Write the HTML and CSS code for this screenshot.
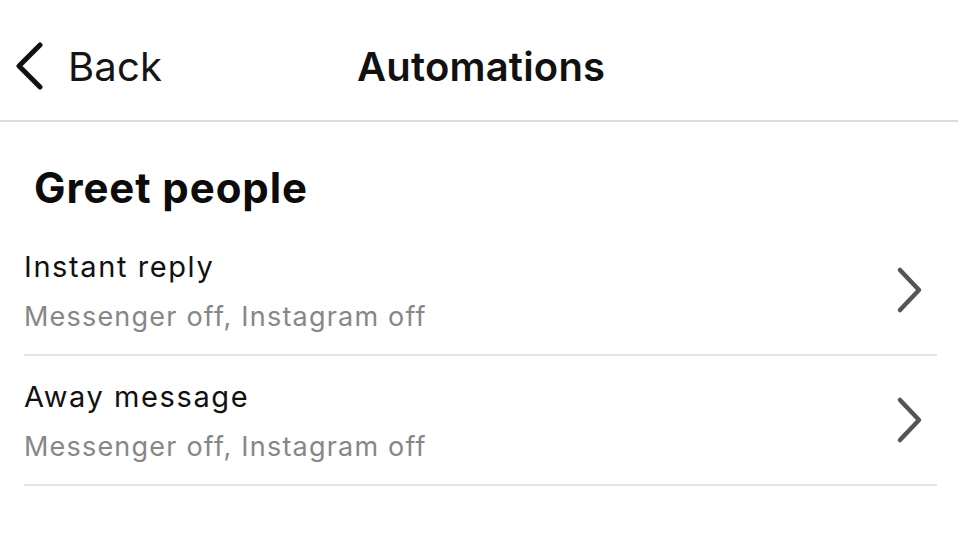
FILE: index.html
```html
<!DOCTYPE html>
<html>
<head>
<meta charset="utf-8">
<link rel="stylesheet" href="styles.css">
</head>
<body>
<div class="screen">
  <header class="topbar">
    <div class="back">
      <svg class="back-icon" width="30" height="48" viewBox="0 0 30 48"><path d="M26 3 L5 24 L26 45" fill="none" stroke="#111" stroke-width="5" stroke-linecap="round" stroke-linejoin="round"/></svg>
      <span class="back-label">Back</span>
    </div>
    <h1 class="title">Automations</h1>
    <div class="spacer"></div>
  </header>
  <section class="section">
    <h2 class="section-title">Greet people</h2>
    <ul class="list">
      <li class="row">
        <div class="row-text">
          <div class="row-title">Instant reply</div>
          <div class="row-sub">Messenger off, Instagram off</div>
        </div>
        <svg class="chev" width="28" height="48" viewBox="0 0 28 48"><path d="M4 4 L23 24 L4 44" fill="none" stroke="#555" stroke-width="4.5" stroke-linecap="round" stroke-linejoin="round"/></svg>
      </li>
      <li class="row">
        <div class="row-text">
          <div class="row-title">Away message</div>
          <div class="row-sub">Messenger off, Instagram off</div>
        </div>
        <svg class="chev" width="28" height="48" viewBox="0 0 28 48"><path d="M4 4 L23 24 L4 44" fill="none" stroke="#555" stroke-width="4.5" stroke-linecap="round" stroke-linejoin="round"/></svg>
      </li>
    </ul>
  </section>
</div>
</body>
</html>
```
FILE: styles.css
```css
* { box-sizing: border-box; }
html, body { margin: 0; padding: 0; background: #fff; }
body {
  font-family: Inter, "Noto Sans", "Liberation Sans", sans-serif;
  color: #111;
  width: 958px;
  height: 555px;
  overflow: hidden;
}
.topbar {
  height: 122px;
  display: flex;
  align-items: center;
  border-bottom: 2px solid #dcdcdc;
  padding: 0 0 0 14px;
}
.back {
  display: flex;
  align-items: center;
  gap: 24px;
  width: 343px;
  padding-top: 12px;
}
.back-icon { display: block; }
.back-label {
  font-size: 40px;
  font-weight: 400;
  color: #151515;
  letter-spacing: 0.2px;
}
.title {
  margin: 0;
  padding-top: 12px;
  font-size: 40px;
  font-weight: 600;
  color: #111;
  letter-spacing: 0.2px;
}
.spacer { flex: 1; }
.section { padding: 0 21px 0 24px; }
.section-title {
  margin: 0 0 14px;
  padding: 42px 0 0 10px;
  font-size: 42px;
  font-weight: 700;
  line-height: 48px;
  letter-spacing: 0.9px;
  color: #0c0c0c;
}
.list { list-style: none; margin: 0; padding: 0; }
.row {
  height: 130px;
  display: flex;
  align-items: flex-start;
  border-bottom: 2px solid #e6e6e6;
}
.row-text { flex: 1; padding-top: 23px; }
.row-title {
  font-size: 29px;
  line-height: 36px;
  letter-spacing: 1.6px;
  color: #111;
}
.row-sub {
  font-size: 27px;
  line-height: 36px;
  letter-spacing: 1.2px;
  color: #878787;
  margin-top: 14px;
}
.chev { margin-right: 13px; display: block; align-self: center; }
```
